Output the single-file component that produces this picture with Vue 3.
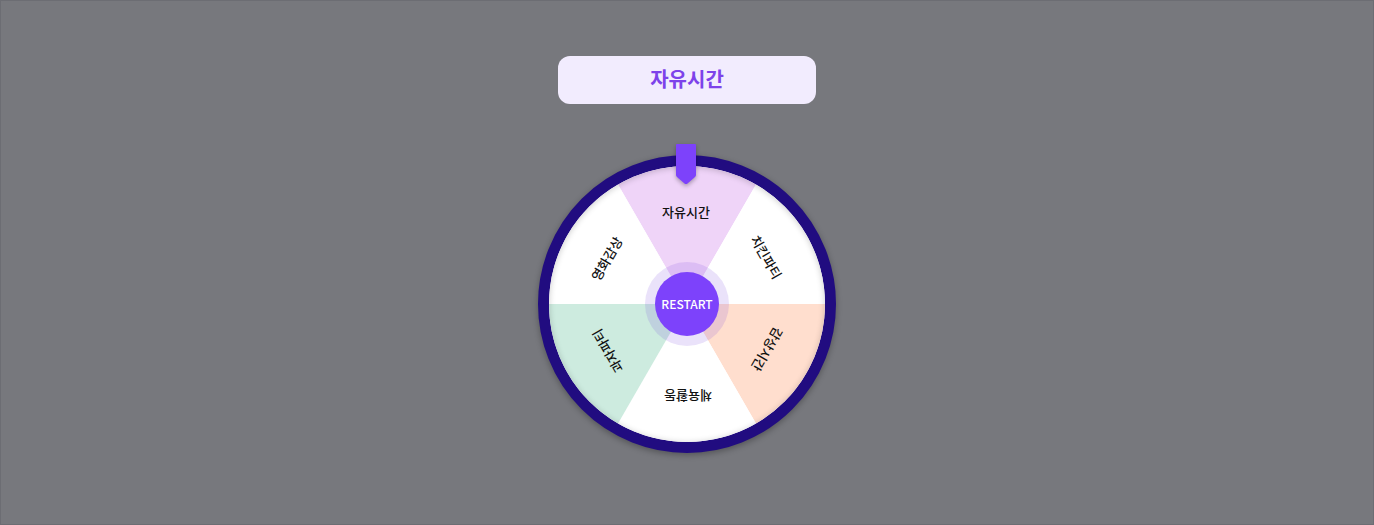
<script setup>
import { ref } from 'vue'

const segments = [
  { label: '자유시간', color: '#efd4f8' },
  { label: '치킨파티', color: '#ffffff' },
  { label: '감상시간', color: '#ffdece' },
  { label: '체육활동', color: '#ffffff' },
  { label: '과자파티', color: '#cdebdf' },
  { label: '영화감상', color: '#ffffff' },
]
const step = 360 / segments.length
const current = ref(0)
const wedge = 'M0 0 L-69 -119.5 A138 138 0 0 1 69 -119.5 Z'

function restart() {
  current.value = Math.floor(Math.random() * segments.length)
}
</script>

<template>
  <main class="stage">
    <output class="result">{{ segments[current].label }}</output>
    <section class="wheel">
      <svg class="disc" viewBox="-138 -138 276 276">
        <circle r="138" fill="#ffffff" />
        <g :transform="`rotate(${-current * step})`">
          <g v-for="(s, i) in segments" :key="s.label" :transform="`rotate(${i * step})`">
            <path :d="wedge" :fill="s.color" />
            <text class="label" x="-1" y="-87" text-anchor="middle">{{ s.label }}</text>
          </g>
        </g>
      </svg>
      <div class="shade"></div>
      <button class="restart" type="button" @click="restart">RESTART</button>
      <svg class="pointer" viewBox="0 0 20 40" aria-hidden="true">
        <path d="M1 0H19Q20 0 20 1V31Q20 32 19 33L11.500 39.500Q10 40.500 8.500 39.500L1 33Q0 32 0 31V1Q0 0 1 0Z" fill="#7d42fb" />
      </svg>
    </section>
  </main>
</template>

<style>
body {
  margin: 0;
  background: #77787d;
}
</style>

<style scoped>
.stage {
  box-sizing: border-box;
  min-height: 100vh;
  padding: 55px 16px 48px;
  display: flex;
  flex-direction: column;
  align-items: center;
  gap: 51px;
  border: 1px solid #6c6d73;
  background: #77787d;
  font-family: "Noto Sans CJK KR", "Noto Sans", sans-serif;
}
.result {
  box-sizing: border-box;
  width: 100%;
  max-width: 258px;
  height: 48px;
  border-radius: 12px;
  background: #f2ecfe;
  color: #7d42ea;
  font-size: 20px;
  font-weight: 700;
  line-height: 46px;
  text-align: center;
}
.wheel {
  position: relative;
  box-sizing: border-box;
  width: 298px;
  height: 298px;
  display: grid;
  place-items: center;
  border: 11px solid #210c80;
  border-radius: 50%;
  background: #210c80;
  box-shadow: 0 2px 6px rgba(0, 0, 0, 0.3);
}
.disc,
.shade,
.restart {
  grid-area: 1 / 1;
}
.disc {
  display: block;
  width: 276px;
  height: 276px;
}
.label {
  font-size: 13px;
  font-weight: 500;
  fill: #111111;
}
.shade {
  width: 276px;
  height: 276px;
  border-radius: 50%;
  box-shadow: inset 0 1px 6px rgba(0, 0, 0, 0.2);
  pointer-events: none;
}
.restart {
  width: 64px;
  height: 64px;
  padding: 0;
  border: 0;
  border-radius: 50%;
  background: #7d42fb;
  box-shadow: 0 0 0 10px rgba(112, 60, 220, 0.15);
  color: #ffffff;
  font-family: inherit;
  font-size: 12px;
  font-weight: 500;
  line-height: 16px;
  cursor: pointer;
}
.pointer {
  position: absolute;
  top: -22px;
  left: 127px;
  width: 20px;
  height: 40px;
  overflow: visible;
  filter: drop-shadow(0 2px 2px rgba(0, 0, 0, 0.3));
}
</style>
